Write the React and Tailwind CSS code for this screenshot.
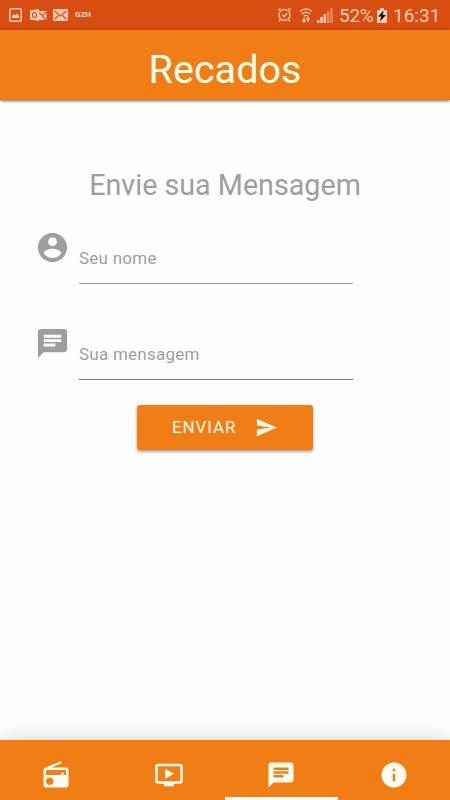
import React from 'react';

const paths = {
  account:
    'M12 2C6.48 2 2 6.48 2 12s4.48 10 10 10 10-4.48 10-10S17.52 2 12 2zm0 3c1.66 0 3 1.34 3 3s-1.34 3-3 3-3-1.34-3-3 1.34-3 3-3zm0 14.2c-2.5 0-4.71-1.28-6-3.22.03-1.99 4-3.08 6-3.08 1.99 0 5.97 1.09 6 3.08-1.29 1.94-3.5 3.22-6 3.22z',
  chat:
    'M20 2H4c-1.1 0-1.99.9-1.99 2L2 22l4-4h14c1.1 0 2-.9 2-2V4c0-1.1-.9-2-2-2zM6 9h12v2H6V9zm8 5H6v-2h8v2zm4-6H6V6h12v2z',
  radio:
    'M3.24 6.15C2.51 6.43 2 7.17 2 8v12c0 1.1.89 2 2 2h16c1.11 0 2-.9 2-2V8c0-1.11-.89-2-2-2H8.3l8.26-3.34L15.88 1 3.24 6.15zM7 20c-1.66 0-3-1.34-3-3s1.34-3 3-3 3 1.34 3 3-1.34 3-3 3zm13-8h-2v-2h-2v2H4V8h16v4z',
  video:
    'M21 3H3c-1.11 0-2 .89-2 2v12c0 1.1.89 2 2 2h5v2h8v-2h5c1.1 0 1.99-.9 1.99-2L23 5c0-1.11-.9-2-2-2zm0 14H3V5h18v12zm-5-6l-7 4V7z',
  info:
    'M12 2C6.48 2 2 6.48 2 12s4.48 10 10 10 10-4.48 10-10S17.52 2 12 2zm1 15h-2v-6h2v6zm0-8h-2V7h2v2z',
  send: 'M2.01 21L23 12 2.01 3 2 10l15 2-15 2z',
};

function Icon({ name, className }) {
  return (
    <svg viewBox="0 0 24 24" fill="currentColor" className={className} aria-hidden="true">
      <path d={paths[name]} />
    </svg>
  );
}

function StatusBar() {
  return (
    <div className="flex h-[30px] items-center justify-between bg-[#d84d12] pl-[9px] pr-[10px] text-[#ffcdb0]">
      {/* Notifications */}
      <div className="flex items-center">
        <svg className="h-[14px] w-[13px]" viewBox="0 0 13 14" aria-hidden="true">
          <rect x="0.8" y="0.8" width="11.4" height="12.4" rx="1" fill="none" stroke="currentColor" strokeWidth="1.6" />
          <path d="M3 10V8l2-2 1.500 1.200L8 5.500l2 2.500v2z" fill="currentColor" />
        </svg>
        <svg className="ml-2 h-[14px] w-[17px]" viewBox="0 0 17 14" aria-hidden="true">
          <path d="M8 3h8.500v9H8z" fill="currentColor" />
          <path d="M8 4l4 3.500L16.500 4M11.500 7.500L16 12" fill="none" stroke="#d84d12" strokeWidth="1.1" />
          <path d="M0 2.500L9 1v12l-9-1.500z" fill="currentColor" />
          <ellipse cx="4.500" cy="7" rx="2" ry="2.500" fill="none" stroke="#d84d12" strokeWidth="1.2" />
        </svg>
        <svg className="ml-[6px] h-[12px] w-[15px]" viewBox="0 0 15 12" aria-hidden="true">
          <rect width="15" height="12" rx="1" fill="currentColor" />
          <path d="M1.500 2l6 5 6-5M1.500 10.500l4-4M13.500 10.500l-4-4" fill="none" stroke="#d84d12" strokeWidth="1.3" />
        </svg>
        <span className="ml-[7px] text-[8px] font-black leading-none">GZH</span>
      </div>

      {/* Device state */}
      <div className="flex items-center">
        <svg className="h-4 w-[15px]" viewBox="0 0 15 16" fill="none" stroke="currentColor" strokeWidth="1.3" aria-hidden="true">
          <circle cx="7.500" cy="8" r="5.500" />
          <path d="M5 7.800l2 2 3.200-3.500M1 3.500L3.500 1.200M14 3.500l-2.500-2.300M3.500 12.500L2 14.500M11.500 12.500l1.500 2" />
        </svg>
        <svg className="ml-[7px] h-4 w-[14px]" viewBox="0 0 14 16" fill="none" stroke="currentColor" strokeWidth="1.3" aria-hidden="true">
          <path d="M1 4.500c3.500-3.500 8.500-3.500 12 0M3 7c2.500-2.300 5.500-2.300 8 0M5 9.200c1.300-1.100 2.700-1.100 4 0" />
          <path d="M5 10.500v4M3.500 13L5 15l1.500-2M9 15v-4M7.500 12.500L9 10.500l1.500 2" />
        </svg>
        <svg className="ml-[4px] h-[15px] w-4" viewBox="0 0 16 15" fill="currentColor" aria-hidden="true">
          <path d="M0 12h2.500v3H0zM3.300 9h2.500v6H3.300zM6.600 6h2.500v9H6.600z" />
          <path d="M9.900 3h2.500v12H9.900zM13.200 0h2.500v15h-2.500z" opacity="0.45" />
        </svg>
        <span className="ml-[6px] w-[35px] whitespace-nowrap text-[19px] leading-none tracking-[-0.3px]">52%</span>
        <svg className="ml-[3px] h-[15px] w-[10px]" viewBox="0 0 10 15" aria-hidden="true">
          <path d="M0 2h3V0h4v2h3v13H0z" fill="currentColor" />
          <path d="M6.500 2.500L1 8.500h3L3 13.500 9 7H6z" fill="#161616" />
        </svg>
        <span className="ml-[6px] w-[47px] whitespace-nowrap text-[19px] leading-none">16:31</span>
      </div>
    </div>
  );
}

function Field({ icon, label, line }) {
  return (
    <div className="flex h-[54px] pl-[35px]">
      <Icon name={icon} className="h-[35px] w-[35px] shrink-0 text-[#9e9e9e]" />
      <label className={`ml-[9px] w-[274px] border-b pt-[16px] text-[17px] leading-6 tracking-[0.25px] text-[#9e9e9e] ${line}`}>
        {label}
      </label>
    </div>
  );
}

function Tab({ name, active }) {
  return (
    <a className="flex h-[60px] flex-1 flex-col items-center" href={`#${name}`} aria-label={name}>
      <Icon name={name} className="mt-[20px] h-[30px] w-[30px] text-[#fffdf0]" />
      {active && <span className="mt-auto h-[3px] w-full bg-[#fffdf5]" />}
    </a>
  );
}

export default function App() {
  return (
    <div className="flex h-[800px] w-[450px] flex-col overflow-hidden bg-[#fefefe] font-['Roboto',sans-serif]">
      <StatusBar />
      <header className="flex h-[70px] shrink-0 items-center justify-center bg-[#f17e15] pt-[9px] shadow-[0_1px_3px_rgba(0,0,0,0.6)]">
        <h1 className="text-[39.6px] leading-none text-[#fffdeb]">Recados</h1>
      </header>

      <main className="flex-1">
        <h2 className="mt-[67px] text-center text-[28.7px] leading-9 text-[#9e9e9e]">Envie sua Mensagem</h2>
        <form className="mt-[27px]">
          <Field icon="account" label="Seu nome" line="border-[#9e9e9e]" />
          <div className="h-[42px]" />
          <Field icon="chat" label="Sua mensagem" line="border-[#77777c]" />
          <button
            type="button"
            className="ml-[137px] mt-[25px] flex h-[45px] w-[176px] items-center rounded-[3px] bg-[#f17e15] pl-[35px] text-[17px] tracking-[0.9px] text-[#fffdeb] shadow-[0_2px_3px_rgba(0,0,0,0.35)]"
          >
            ENVIAR
            <Icon name="send" className="ml-[19px] h-[23px] w-[23px]" />
          </button>
        </form>
      </main>

      <nav className="flex h-[60px] shrink-0 bg-[#f17e15] shadow-[0_-2px_20px_rgba(0,0,0,0.14)]">
        <Tab name="radio" />
        <Tab name="video" />
        <Tab name="chat" active />
        <Tab name="info" />
      </nav>
    </div>
  );
}
